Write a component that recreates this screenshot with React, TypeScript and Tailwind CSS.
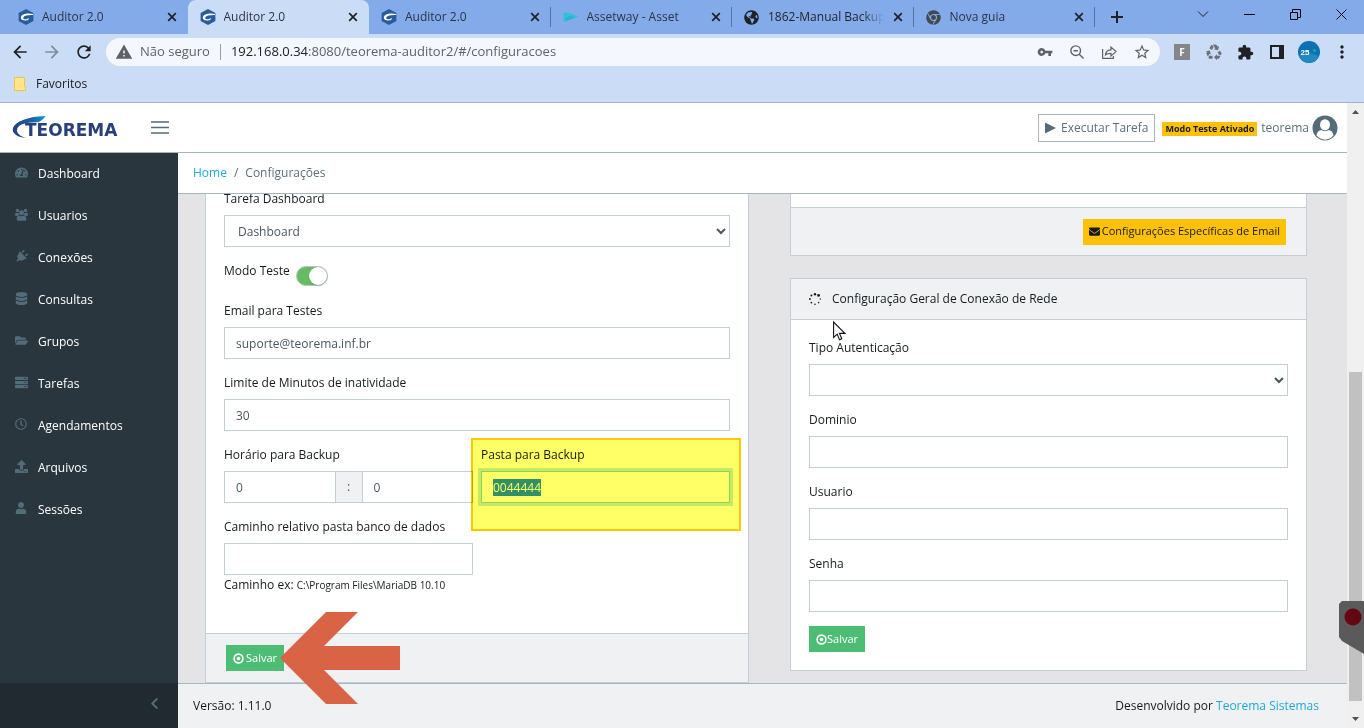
import { useEffect, useRef } from "react";
import type { ReactNode } from "react";
import {
  FaChevronLeft,
  FaChrome,
  FaDatabase,
  FaEnvelope,
  FaFolderOpen,
  FaGlobeAmericas,
  FaPlug,
  FaRegClock,
  FaServer,
  FaTachometerAlt,
  FaUpload,
  FaUser,
} from "react-icons/fa";
import {
  MdArrowBack,
  MdArrowForward,
  MdExtension,
  MdMoreVert,
  MdOutlineStarBorder,
  MdRecycling,
  MdRefresh,
  MdVpnKey,
  MdWarning,
} from "react-icons/md";

function AuditorIcon() {
  return (
    <svg viewBox="0 0 16 16" className="size-4">
      <path d="M8 0l7.400 4v8L8 16 .6 12V4z" fill="#2a5c9c" />
      <path d="M15 5C9.500 3.600 3.200 5 2.800 8.400c-.2 2 2 3.200 5 3 1.400-.1 2.200-.5 2.700-1 .4-.5.300-1-.3-1.300-.5.800-1.500 1.300-2.700 1.200-1.800-.1-2.700-1-2.100-2.100C6.400 6.500 10 5.800 15 6z" fill="#fff" />
    </svg>
  );
}

function AssetwayIcon() {
  return (
    <svg viewBox="0 0 16 16" className="size-4">
      <path d="M.5 3.500c5 0 10 2 15.500 4.500-5 1-10 3-15.500 5z" fill="#2fc1d6" />
      <path d="M2 10l7-3M3 11.500l8-3.200" stroke="#27a9dc" strokeWidth="1" />
    </svg>
  );
}

type TabInfo = { title: string; icon: ReactNode; active?: boolean; line?: boolean; faded?: boolean };

const tabs: TabInfo[] = [
  { title: "Auditor 2.0", icon: <AuditorIcon /> },
  { title: "Auditor 2.0", icon: <AuditorIcon />, active: true },
  { title: "Auditor 2.0", icon: <AuditorIcon />, line: true },
  { title: "Assetway - Asset", icon: <AssetwayIcon />, line: true },
  { title: "1862-Manual Backup Auditor", icon: <FaGlobeAmericas className="size-[15px] text-[#202124]" />, line: true, faded: true },
  { title: "Nova guia", icon: <FaChrome className="size-[15px] text-[#45494e]" />, line: true },
];

function CloseGlyph() {
  return (
    <svg viewBox="0 0 10 10" className="size-[10px]">
      <path d="M1.200 1.200l7.600 7.600M8.800 1.200L1.200 8.800" stroke="#202124" strokeWidth="1.700" />
    </svg>
  );
}

function TabStrip() {
  return (
    <div className="flex h-[34px] bg-[#83abea] pl-[6px]">
      <div className="flex w-[1089px] min-w-0">
        {tabs.map((tab, i) => (
          <div
            key={i}
            className={
              tab.active
                ? "flex min-w-0 flex-1 items-center rounded-t-lg bg-[#cbdcf6] pl-3 pr-[10px]"
                : "flex min-w-0 flex-1 items-center pl-3 pr-[10px]"
            }
          >
            <span className="flex w-6 shrink-0 items-center">{tab.icon}</span>
            <span
              className={
                tab.faded
                  ? "min-w-0 flex-1 overflow-hidden whitespace-nowrap bg-gradient-to-r from-[#202124] from-80% to-transparent bg-clip-text text-transparent"
                  : "min-w-0 flex-1 overflow-hidden whitespace-nowrap text-[#2b3443]"
              }
            >
              {tab.title}
            </span>
            <button aria-label="Fechar guia" className="ml-2 shrink-0">
              <CloseGlyph />
            </button>
            {tab.line ? (
              <span className="-mr-[10px] ml-[10px] h-5 w-px bg-[#5274a8]" />
            ) : (
              <span className="-mr-[10px] ml-[10px] w-px" />
            )}
          </div>
        ))}
      </div>
      <button aria-label="Nova guia" className="ml-4">
        <svg viewBox="0 0 12 12" className="size-3">
          <path d="M6 0v12M0 6h12" stroke="#202124" strokeWidth="2" />
        </svg>
      </button>
      <div className="ml-auto flex items-center gap-[35px] pb-[6px] pr-[17px]">
        <button aria-label="Pesquisar guias">
          <svg viewBox="0 0 12 12" className="size-3" fill="none" stroke="#202124">
            <path d="M1 3.500l5 5 5-5" />
          </svg>
        </button>
        <button aria-label="Minimizar">
          <svg viewBox="0 0 11 11" className="size-[11px]" fill="none" stroke="#000">
            <path d="M0 5.500h11" />
          </svg>
        </button>
        <button aria-label="Restaurar">
          <svg viewBox="0 0 11 11" className="size-[11px]" fill="none" stroke="#000">
            <path d="M.5 3.500h7v7h-7zM2.500 3.500V.5h8v8h-3" />
          </svg>
        </button>
        <button aria-label="Fechar">
          <svg viewBox="0 0 11 11" className="size-[11px]" fill="none" stroke="#000">
            <path d="M.5.5l10 10M10.500.5l-10 10" />
          </svg>
        </button>
      </div>
    </div>
  );
}

function AddressRow() {
  return (
    <div className="flex h-9 items-center bg-[#cbdcf6] pl-[10px] pr-3 text-[#202124]">
      <button aria-label="Voltar" className="w-8"><MdArrowBack className="size-5" /></button>
      <button aria-label="Avançar" className="w-8"><MdArrowForward className="size-5 text-[#818b9d]" /></button>
      <button aria-label="Recarregar" className="w-8"><MdRefresh className="size-5" /></button>
      <div className="flex h-7 flex-1 items-center rounded-full bg-[#f4f7fd] pl-[9px] pr-[9px] text-[13px] text-[#5f6368]">
        <MdWarning className="size-[18px]" />
        <span className="ml-[7px]">Não seguro</span>
        <span className="mx-[10px] h-4 w-px bg-[#9a9da3]" />
        <span className="flex-1"><span className="text-[#202124]">192.168.0.34</span>:8080/teorema-auditor2/#/configuracoes</span>
        <span className="flex items-center gap-4">
          <MdVpnKey className="size-4" />
          <svg viewBox="0 0 16 16" className="size-4" fill="none" stroke="#5f6368" strokeWidth="1.400">
            <circle cx="6.700" cy="6.700" r="4.800" />
            <path d="M10.200 10.200l4.400 4.400M4.500 6.700h4.400" />
          </svg>
          <svg viewBox="0 0 16 16" className="size-4" fill="none" stroke="#5f6368" strokeWidth="1.200">
            <path d="M1.600 5v9.400h10.800V12M4.500 10.800C5 7 7.500 5.800 10 5.800V3l5 4.600-5 4.400V9.300C7.500 9.300 6 9.600 4.500 10.800z" />
          </svg>
          <MdOutlineStarBorder className="size-[18px]" />
        </span>
      </div>
      <div className="ml-[14px] flex items-center">
        <span className="flex size-4 items-center justify-center bg-[#868686] text-[10px] font-bold leading-4 text-white">F</span>
        <MdRecycling className="ml-[15px] size-[18px] text-[#6d7178]" />
        <MdExtension className="ml-[14px] size-[17px]" />
        <svg viewBox="0 0 14 14" className="ml-4 size-[14px]">
          <path d="M1 1h12v12H1z" fill="none" stroke="#202124" strokeWidth="2" />
          <path d="M9 0h5v14H9z" fill="#202124" />
        </svg>
        <svg viewBox="0 0 22 22" className="ml-[14px] size-[22px]">
          <circle cx="11" cy="11" r="11" fill="#0b70b4" />
          <path d="M1 15c5-4 12-3 20 0-2 4-6 7-10 7S3 19 1 15z" fill="#2288bf" />
          <circle cx="16.500" cy="9.500" r="1.600" fill="#21a883" />
          <text x="2.500" y="13.500" fontSize="8" fontWeight="700" fill="#fff" fontFamily="Liberation Sans">25</text>
        </svg>
        <button aria-label="Menu" className="ml-3"><MdMoreVert className="size-5" /></button>
      </div>
    </div>
  );
}

function Browser() {
  return (
    <header className="shrink-0 border-b border-[#a1b3cf]">
      <TabStrip />
      <AddressRow />
      <div className="flex h-8 items-center gap-[10px] bg-[#cbdcf6] pb-1 pl-[14px] text-[#202124]">
        <svg viewBox="0 0 12 14" className="h-[14px] w-3">
          <path d="M.5.5h10v9l1 .5v3.500H.5z" fill="#ffe48a" stroke="#edc54b" />
        </svg>
        Favoritos
      </div>
    </header>
  );
}

function Logo() {
  return (
    <a href="#home" aria-label="Teorema" className="flex w-[114px] items-end">
      <svg viewBox="0 0 114 24" className="h-6 w-[114px]">
        <defs>
          <linearGradient id="swoosh" x1="0" x2="1">
            <stop offset="0" stopColor="#27407c" />
            <stop offset=".55" stopColor="#1c5e9d" />
            <stop offset="1" stopColor="#0a9ad6" />
          </linearGradient>
        </defs>
        <path d="M33.500 0C15 .5.5 6.500.8 14c.2 4 5 7.200 13.200 8-5.500-1.600-9-4.300-9-7.500C5 9 12 6.200 26 6.300 29 5.300 32 2.500 33.500 0z" fill="url(#swoosh)" />
        <text x="13" y="20" fontSize="17" fontWeight="700" fill="#27407c" fontFamily="DejaVu Sans">TEOREMA</text>
      </svg>
    </a>
  );
}

function TopBar() {
  return (
    <div className="flex h-[50px] shrink-0 items-center border-b border-[#a4b7c1] bg-white pl-3 pr-[9px] text-[#5c6f7c]">
      <Logo />
      <button aria-label="Alternar menu" className="ml-[25px]">
        <svg viewBox="0 0 18 13" className="h-[13px] w-[18px]">
          <path d="M0 1h18M0 6.500h18M0 12h18" stroke="#536c79" strokeWidth="1.300" />
        </svg>
      </button>
      <button className="ml-auto flex h-7 items-center gap-[5px] border border-[#a4b7c1] px-[6px]">
        <svg viewBox="0 0 11 12" className="h-3 w-[11px]"><path d="M0 .5L11 6 0 11.500z" fill="#536c79" /></svg>
        Executar Tarefa
      </button>
      <span className="ml-[7px] mt-[3px] bg-[#ffc107] px-[3px] text-[9px] font-bold leading-[14px] text-[#151b1e]">Modo Teste Ativado</span>
      <span className="ml-1">teorema</span>
      <svg viewBox="0 0 26 26" className="ml-[3px] size-[26px]">
        <circle cx="13" cy="13" r="12.500" fill="#536c79" />
        <path d="M4.500 20.500c.6-4 3-5.300 5-5.500 2 1.700 5 1.700 7 0 2 .2 4.400 1.500 5 5.500-4.600 5.500-12.400 5.500-17 0z" fill="#fff" />
        <ellipse cx="13" cy="9.800" rx="5" ry="5.600" fill="#fff" />
      </svg>
    </div>
  );
}

function GroupIcon({ className }: { className?: string }) {
  return (
    <svg viewBox="0 0 14 14" className={className} fill="currentColor">
      <circle cx="2.700" cy="2.800" r="1.900" />
      <circle cx="11.300" cy="2.800" r="1.900" />
      <path d="M0 7.500C0 5.500.6 5 1.300 5c.8.5 2 .6 2.700.3 0 1 .2 1.700.7 2.400-1 0-1.700.3-2.300.9C.7 8.600 0 8.300 0 7.500zM14 7.500C14 5.500 13.400 5 12.700 5c-.8.500-2 .6-2.700.3 0 1-.2 1.700-.7 2.400 1 0 1.700.3 2.300.9 1.700 0 2.400-.3 2.400-1.100z" />
      <circle cx="7" cy="5.200" r="2.700" />
      <path d="M4.300 8.200c1.600 1 3.800 1 5.400 0 1.600 0 2.500 1.500 2.500 3.600 0 1.300-.8 2-2 2H3.800c-1.200 0-2-.7-2-2 0-2.100.9-3.600 2.500-3.600z" />
    </svg>
  );
}

const navItems = [
  { label: "Dashboard", icon: FaTachometerAlt },
  { label: "Usuarios", icon: GroupIcon },
  { label: "Conexões", icon: FaPlug, iconClass: "mb-1 size-[13px] rotate-45 text-[#536c79]" },
  { label: "Consultas", icon: FaDatabase },
  { label: "Grupos", icon: FaFolderOpen },
  { label: "Tarefas", icon: FaServer },
  { label: "Agendamentos", icon: FaRegClock, iconClass: "mb-1 size-3 text-[#536c79]" },
  { label: "Arquivos", icon: FaUpload },
  { label: "Sessões", icon: FaUser, iconClass: "mb-1 size-3 text-[#536c79]" },
];

function Sidebar() {
  return (
    <aside className="flex w-[178px] shrink-0 flex-col bg-[#29363d] text-white">
      <nav className="flex-1">
        {navItems.map(({ label, icon: Icon, iconClass }) => (
          <a key={label} href={"#" + label} className="flex h-[42px] items-center pl-[15px] font-medium">
            <span className="flex w-[23px] shrink-0"><Icon className={iconClass ?? "mb-1 size-[13px] text-[#536c79]"} /></span>
            {label}
          </a>
        ))}
      </nav>
      <button aria-label="Recolher menu" className="flex h-[45px] items-center justify-end bg-[#222a31] pr-[17px]">
        <FaChevronLeft className="mb-1 size-[13px] text-[#536c79]" />
      </button>
    </aside>
  );
}

const inputBase = "h-8 w-full min-w-0 border border-[#c2cfd6] bg-white px-[11px] text-[#4b5760] outline-none";
const selectBase = "h-8 w-full min-w-0 border border-[#c2cfd6] bg-white px-[9px] text-[#4b5760] outline-none";
const labelBase = "mb-[6px] block pt-px leading-5";

function Field({ id, label, children }: { id: string; label: string; children?: ReactNode }) {
  return (
    <div className="mb-[13px]">
      <label htmlFor={id} className={labelBase}>{label}</label>
      {children ?? <input id={id} className={inputBase} />}
    </div>
  );
}

function SaveIcon() {
  return (
    <svg viewBox="0 0 12 12" className="size-[11px]">
      <circle cx="6" cy="6" r="4.800" fill="none" stroke="#fff" strokeWidth="1.800" />
      <circle cx="6" cy="6" r="2" fill="#fff" />
    </svg>
  );
}

function GeneralCard() {
  const folder = useRef<HTMLInputElement>(null);
  useEffect(() => {
    folder.current?.focus({ preventScroll: true });
    folder.current?.select();
  }, []);

  return (
    <section className="-mt-[6px] flex flex-col border-x border-b border-[#c2cfd6] bg-white">
      <div className="flex-1 px-[18px]">
        <Field id="task" label="Tarefa Dashboard">
          <select id="task" className={selectBase} defaultValue="Dashboard">
            <option>Dashboard</option>
          </select>
        </Field>
        <div className="flex h-10 gap-[6px]">
          <label htmlFor="test-mode" className="pt-px leading-5">Modo Teste</label>
          <span className="relative mt-[6px] h-5 w-8">
            <input id="test-mode" type="checkbox" defaultChecked className="peer size-full appearance-none rounded-full border border-[#b9c2c0] bg-white checked:bg-[#64bd63]" />
            <span className="pointer-events-none absolute right-px top-px size-[18px] rounded-full bg-white shadow" />
          </span>
        </div>
        <Field id="test-mail" label="Email para Testes">
          <input id="test-mail" className={inputBase} defaultValue="suporte@teorema.inf.br" />
        </Field>
        <Field id="limit" label="Limite de Minutos de inatividade">
          <input id="limit" className={inputBase} defaultValue="30" />
        </Field>
        <div className="grid grid-cols-2 gap-2">
          <Field id="hour" label="Horário para Backup">
            <div className="flex">
              <input id="hour" className={inputBase} defaultValue="0" />
              <span className="flex w-[26px] shrink-0 items-center justify-center border-y border-[#c2cfd6] bg-[#f0f1f3] text-[#4b5760]">:</span>
              <input aria-label="Minuto" className={inputBase} defaultValue="0" />
            </div>
          </Field>
          <div className="relative">
            <Field id="folder" label="Pasta para Backup">
              <input
                id="folder"
                ref={folder}
                defaultValue="0044444"
                className="h-8 w-full border border-[#8ad4ee] bg-white px-[11px] text-[#4b5760] outline-none ring-[3px] ring-[#c7e9f5] selection:bg-[#3390ff] selection:text-white"
              />
            </Field>
            <div className="pointer-events-none absolute -bottom-[15px] -left-[10px] -right-[11px] -top-[6px] border-2 border-[#ffc800] bg-[#ffff66] mix-blend-multiply" />
          </div>
        </div>
        <div className="grid grid-cols-2 gap-2">
          <div>
            <label htmlFor="path" className={labelBase}>Caminho relativo pasta banco de dados</label>
            <input id="path" className={inputBase} />
            <p className="whitespace-nowrap leading-5">Caminho ex: <small className="text-[10px]">C:\Program Files\MariaDB 10.10</small></p>
          </div>
        </div>
      </div>
      <footer className="flex h-[49px] items-center border-t border-[#c2cfd6] bg-[#f0f1f3] px-5">
        <button className="flex h-[26px] items-center gap-[2px] bg-[#4dbd74] px-[7px] text-[11px] text-white"><SaveIcon />Salvar</button>
      </footer>
    </section>
  );
}

function NetworkColumn() {
  return (
    <div>
      <section className="border-x border-b border-[#c2cfd6] bg-white pt-[13px]">
        <footer className="flex h-12 items-center justify-end border-t border-[#c2cfd6] bg-[#f0f1f3] pr-5">
          <button className="flex h-[26px] items-center gap-[2px] bg-[#ffc107] px-[6px] text-[11px] text-[#151b1e]">
            <FaEnvelope className="size-[11px]" />Configurações Específicas de Email
          </button>
        </footer>
      </section>
      <section className="mt-[22px] border border-[#c2cfd6] bg-white">
        <header className="flex h-[41px] items-center gap-[11px] border-b border-[#c2cfd6] bg-[#f0f1f3] px-[18px]">
          <svg viewBox="0 0 12 12" className="size-3" fill="#151b1e">
            <circle cx="6" cy="1.200" r="1.200" /><circle cx="9.600" cy="2.400" r="1.400" /><circle cx="11.200" cy="6" r=".7" />
            <circle cx="9.600" cy="9.600" r=".8" /><circle cx="6" cy="11.200" r=".8" /><circle cx="2.400" cy="9.600" r=".9" />
            <circle cx=".9" cy="6" r=".9" /><circle cx="2.400" cy="2.400" r="1" />
          </svg>
          Configuração Geral de Conexão de Rede
        </header>
        <div className="px-[18px] pb-[18px] pt-[17px]">
          <Field id="auth" label="Tipo Autenticação">
            <select id="auth" className={selectBase}><option></option></select>
          </Field>
          <Field id="domain" label="Dominio" />
          <Field id="user" label="Usuario" />
          <Field id="password" label="Senha" />
          <button className="mt-[14px] flex h-[26px] items-center bg-[#4dbd74] px-[7px] text-[11px] text-white"><SaveIcon />Salvar</button>
        </div>
      </section>
    </div>
  );
}

function Scrollbar() {
  return (
    <div className="flex w-[17px] shrink-0 flex-col items-center bg-[#f0f0f0]">
      <svg viewBox="0 0 17 17" className="size-[17px]"><path d="M5 11l3.500-4 3.500 4z" fill="#505050" /></svg>
      <div className="flex w-full flex-1 flex-col px-[2px]">
        <div className="flex-[252]" />
        <div className="flex-[329] bg-[#c1c1c1]" />
        <div className="flex-[10]" />
      </div>
      <svg viewBox="0 0 17 17" className="size-[17px]"><path d="M5 6l3.500 4L12 6z" fill="#505050" /></svg>
    </div>
  );
}

export default function App() {
  return (
    <div className="relative flex h-screen flex-col overflow-hidden bg-white font-['Open_Sans','Noto_Sans',sans-serif] text-[12px] text-[#151b1e]">
      <Browser />
      <div className="flex min-h-0 flex-1">
        <div className="flex min-w-0 flex-1 flex-col">
          <TopBar />
          <div className="flex min-h-0 flex-1">
            <Sidebar />
            <div className="flex min-w-0 flex-1 flex-col">
              <nav className="flex h-[41px] shrink-0 items-center gap-[7px] border-b border-[#a4b7c1] bg-white px-[15px] text-[#5c6f7c]">
                <a href="#home" className="text-[#20a8d8]">Home</a><span>/</span><span>Configurações</span>
              </nav>
              <main className="grid min-h-0 flex-1 grid-cols-[544fr_517fr] gap-[41px] overflow-hidden bg-[#e4e4e6] pl-[27px] pr-10">
                <GeneralCard />
                <NetworkColumn />
              </main>
              <footer className="flex h-[45px] shrink-0 items-center justify-between border-t border-[#a4b7c1] bg-[#f0f1f3] pl-[15px] pr-7">
                <span>Versão: 1.11.0</span>
                <span>Desenvolvido por <a href="#teorema" className="text-[#20a8d8]">Teorema Sistemas</a></span>
              </footer>
            </div>
          </div>
        </div>
        <Scrollbar />
      </div>

      <svg viewBox="0 0 120 92" className="pointer-events-none absolute left-[280px] top-[612px] h-[92px] w-[120px]">
        <path d="M0 46L46 0h32L44 34h76v24H44l34 34H46z" fill="#d96445" />
      </svg>
      <svg viewBox="0 0 13 20" className="pointer-events-none absolute left-[833px] top-[321px] h-5 w-[13px]">
        <path d="M.6 1v15.500l3.600-3.400 2.300 5.600 2.300-1-2.300-5.300h5.300z" fill="#fff" stroke="#11111c" strokeWidth="1.100" />
      </svg>
      <svg viewBox="0 0 25 53" className="absolute right-0 top-[601px] h-[53px] w-[25px]">
        <path d="M3 0h22v53L3 40 0 36V3z" fill="#5a5a5a" />
        <circle cx="14" cy="16" r="8.500" fill="#650710" />
      </svg>
    </div>
  );
}
